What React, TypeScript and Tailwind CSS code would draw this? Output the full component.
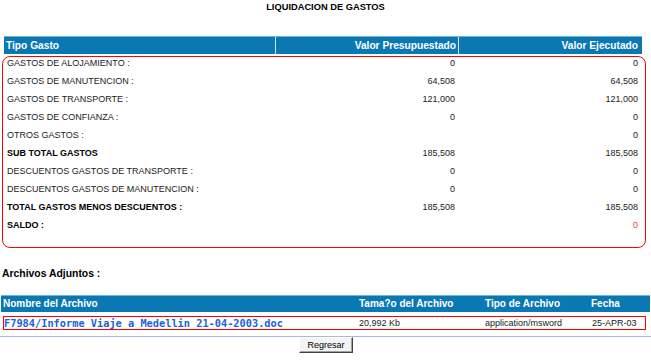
import React from "react";

const rows: { label: string; a: string; b: string; bold?: boolean; red?: boolean }[] = [
  { label: "GASTOS DE ALOJAMIENTO :", a: "0", b: "0" },
  { label: "GASTOS DE MANUTENCION :", a: "64,508", b: "64,508" },
  { label: "GASTOS DE TRANSPORTE :", a: "121,000", b: "121,000" },
  { label: "GASTOS DE CONFIANZA :", a: "0", b: "0" },
  { label: "OTROS GASTOS :", a: "", b: "0" },
  { label: "SUB TOTAL GASTOS", a: "185,508", b: "185,508", bold: true },
  { label: "DESCUENTOS GASTOS DE TRANSPORTE :", a: "0", b: "0" },
  { label: "DESCUENTOS GASTOS DE MANUTENCION :", a: "0", b: "0" },
  { label: "TOTAL GASTOS MENOS DESCUENTOS :", a: "185,508", b: "185,508", bold: true },
  { label: "SALDO :", a: "", b: "0", bold: true, red: true },
];

export default function App() {
  return (
    <div className="w-[651px] h-[360px] bg-white overflow-hidden font-['Liberation_Sans',Arial,sans-serif] text-[#222]">
      <div className="pt-[2px] h-[36px] text-center text-[9.3px] leading-[11px] font-bold text-black">
        LIQUIDACION DE GASTOS
      </div>

      <div className="ml-[4px] w-[638px] h-[18px] flex bg-[#0a78b3] border-t border-t-[#6db2da] text-white font-bold text-[10.2px] leading-[17px]">
        <div className="w-[271px] pl-[2px]">Tipo Gasto</div>
        <div className="w-[1px] bg-[#cfe6f3]" />
        <div className="w-[182px] text-right pr-[2px]">Valor Presupuestado</div>
        <div className="w-[1px] bg-[#cfe6f3]" />
        <div className="flex-1 text-right pr-[4px]">Valor Ejecutado</div>
      </div>

      <div className="ml-[2px] mt-[2px] w-[644px] border border-[#ff0000] rounded-[8px] pb-[10px]">
        {rows.map((r, i) => (
          <div key={i} className="grid grid-cols-[272px_183px_184px] h-[18px] text-[9px] leading-[13px]">
            <div className={`pl-[4px] ${r.bold ? "font-bold text-black" : ""}`}>{r.label}</div>
            <div className="text-right pr-[3px]">{r.a}</div>
            <div className={`text-right pr-[4px] ${r.red ? "text-[#ff3333]" : ""}`}>{r.b}</div>
          </div>
        ))}
      </div>

      <div className="mt-[20px] pl-[2px] text-[10.4px] leading-[12px] font-bold text-black">Archivos Adjuntos :</div>

      <div className="mt-[15px] ml-[1px] w-[649px] h-[17px] flex bg-[#0a78b3] border-t border-t-[#6db2da] text-white font-bold text-[10px] leading-[16px]">
        <div className="w-[355px] pl-[2px]">Nombre del Archivo</div>
        <div className="w-[126px] pl-[3px]">Tama?o del Archivo</div>
        <div className="w-[106px] pl-[3px]">Tipo de Archivo</div>
        <div className="flex-1 pl-[3px]">Fecha</div>
      </div>

      <div className="mt-[4px] ml-[3px] w-[643px] h-[14px] border border-[#ff0000] grid grid-cols-[355px_126px_106px_1fr] items-center text-[9px] leading-[12px]">
        <div className="font-['DejaVu_Sans_Mono',monospace] font-bold text-[10.3px] text-[#1d62d6] whitespace-nowrap">
          F7984/Informe Viaje a Medellin 21-04-2003.doc
        </div>
        <div>20,992 Kb</div>
        <div>application/msword</div>
        <div className="pl-[1px]">25-APR-03</div>
      </div>

      <div className="mt-[6px] h-[1px] bg-[#a9bccf]" />
      <div className="flex justify-center">
        <button className="ml-[1px] w-[54px] h-[16px] bg-[#f4f4f4] border border-t-white border-l-white border-r-[#404040] border-b-[#404040] shadow-[inset_-1px_-1px_0_#a0a0a0] text-[9px] leading-[12px] text-black font-['Liberation_Sans',Arial,sans-serif]">
          Regresar
        </button>
      </div>
    </div>
  );
}
